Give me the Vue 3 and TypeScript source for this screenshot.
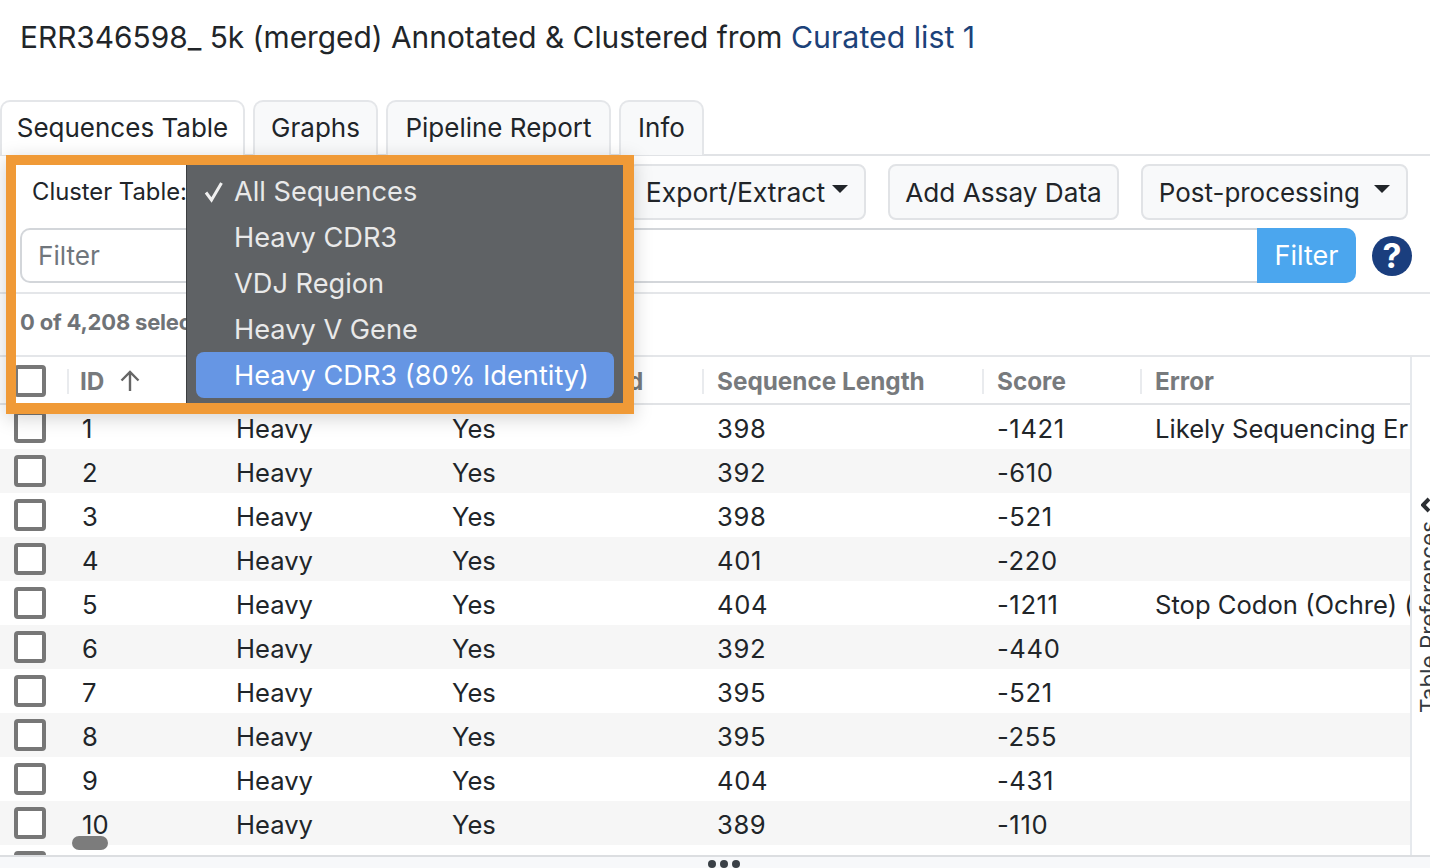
<script setup lang="ts">
interface Row { id: number; len: number; score: number; error: string }
const rows: Row[] = [
  { id: 1, len: 398, score: -1421, error: 'Likely Sequencing Error' },
  { id: 2, len: 392, score: -610, error: '' },
  { id: 3, len: 398, score: -521, error: '' },
  { id: 4, len: 401, score: -220, error: '' },
  { id: 5, len: 404, score: -1211, error: 'Stop Codon (Ochre) (1)' },
  { id: 6, len: 392, score: -440, error: '' },
  { id: 7, len: 395, score: -521, error: '' },
  { id: 8, len: 395, score: -255, error: '' },
  { id: 9, len: 404, score: -431, error: '' },
  { id: 10, len: 389, score: -110, error: '' },
  { id: 11, len: 398, score: -300, error: '' },
]
const tabs = ['Sequences Table', 'Graphs', 'Pipeline Report', 'Info']
const menu = ['All Sequences', 'Heavy CDR3', 'VDJ Region', 'Heavy V Gene', 'Heavy CDR3 (80% Identity)']
</script>

<template>
  <div class="page">
    <h1 class="title">ERR346598_ 5k (merged) Annotated &amp; Clustered from <a class="link">Curated list 1</a></h1>

    <nav class="tabs">
      <div v-for="(t, i) in tabs" :key="t" class="tab" :class="{ active: i === 0 }">{{ t }}</div>
    </nav>

    <div class="toolbar">
      <span class="cluster">Cluster Table:</span>
      <div class="actions">
        <button class="btn export">Export/Extract<i class="caret"></i></button>
        <button class="btn assay">Add Assay Data</button>
        <button class="btn post">Post-processing<i class="caret"></i></button>
      </div>
    </div>

    <div class="filter-row">
      <div class="input">Filter</div>
      <button class="filter-btn">Filter</button>
      <span class="help">?</span>
    </div>

    <div class="selected">0 of 4,208 selected</div>

    <div class="content">
      <div class="table">
        <div class="grid head">
          <div class="cell check"><span class="box"></span></div>
          <div class="cell id"><span class="th">ID</span>
            <svg class="arrow" width="24" height="24" viewBox="0 0 24 24" fill="none" stroke="#666" stroke-width="2.4"><path d="M12 22V3M3.5 11.5 12 3l8.5 8.5" /></svg>
          </div>
          <div class="cell"><span class="th">Chain</span></div>
          <div class="cell annotated"><span class="th">Fully Annotated</span></div>
          <div class="cell"><span class="th">Sequence Length</span></div>
          <div class="cell"><span class="th">Score</span></div>
          <div class="cell"><span class="th">Error</span></div>
        </div>
        <div v-for="r in rows" :key="r.id" class="grid row" :class="{ even: r.id % 2 === 0 }">
          <div class="td check"><span class="box"></span></div>
          <div class="td">{{ r.id }}</div>
          <div class="td">Heavy</div>
          <div class="td">Yes</div>
          <div class="td num">{{ r.len }}</div>
          <div class="td num">{{ r.score }}</div>
          <div class="td err">{{ r.error }}</div>
        </div>
        <span class="thumb"></span>
      </div>
      <aside class="side">
        <svg class="chev" width="14" height="20" viewBox="0 0 14 20" fill="none" stroke="#2c2f33" stroke-width="4"><path d="M1 11 8 4M1 9l7 7" /></svg>
        <span class="side-text">Table Preferences</span>
      </aside>
    </div>

    <div class="bottom"><i></i><i></i><i></i></div>

    <div class="highlight">
      <ul class="menu">
        <li v-for="(m, i) in menu" :key="m" :class="{ sel: i === 4 }">
          <svg v-if="i === 0" class="tick" width="20" height="22" viewBox="0 0 20 22" fill="none" stroke="#f0f0f0" stroke-width="3"><path d="M2 11.5 7.5 19 17.5 2" /></svg>
          {{ m }}
        </li>
      </ul>
    </div>
  </div>
</template>

<style scoped>
.page {
  position: relative;
  width: 1430px;
  height: 868px;
  overflow: hidden;
  background: #fff;
  display: flex;
  flex-direction: column;
  font-family: Inter, "Liberation Sans", sans-serif;
  color: #212529;
  font-size: 26.2px;
}
.title {
  margin: 0;
  height: 100px;
  padding: 16px 0 0 20px;
  box-sizing: border-box;
  font-size: 29.85px;
  line-height: 42px;
  font-weight: 400;
}
.link { color: #1c4279; font-size: 30.3px; }
.tabs {
  display: grid;
  grid-template-columns: 245px 125px 225px 85px;
  gap: 8px;
  height: 56px;
  box-sizing: border-box;
  border-bottom: 2px solid #e1e3e6;
  font-size: 26px;
}
.tab {
  height: 55px;
  line-height: 52px;
  text-align: center;
  white-space: nowrap;
  box-sizing: border-box;
  background: #f8f9fa;
  border: 2px solid #e4e6e9;
  border-bottom: 0;
  border-radius: 10px 10px 0 0;
}
.tab.active { background: #fff; }
.toolbar {
  height: 72px;
  display: flex;
  justify-content: space-between;
  padding: 8px 22px 0 32px;
  box-sizing: border-box;
}
.cluster { line-height: 56px; font-size: 23.8px; }
.actions { display: flex; gap: 22px; }
.btn {
  height: 56px;
  padding: 0 16px;
  font: inherit;
  color: #212529;
  background: #f8f9fa;
  border: 2px solid #e1e3e6;
  border-radius: 8px;
  display: flex;
  align-items: center;
}
.export { font-size: 26.5px; }
.assay { padding: 0 15px; }
.post { font-size: 25.95px; }
.caret {
  margin-left: 7px;
  width: 0;
  height: 0;
  border: 8px solid transparent;
  border-top-color: #212529;
  border-bottom: 0;
  margin-top: -6px;
}
.post .caret { margin-left: 14px; }
.filter-row {
  height: 55px;
  display: flex;
  padding: 0 18px 0 20px;
  align-items: center;
}
.input {
  flex: 1;
  height: 55px;
  box-sizing: border-box;
  border: 2px solid #d3d6da;
  border-right: 0;
  border-radius: 10px 0 0 10px;
  color: #70767c;
  line-height: 51px;
  padding-left: 16px;
}
.filter-btn {
  width: 99px;
  height: 55px;
  font: inherit;
  font-size: 27px;
  color: #fff;
  background: #4ba6ee;
  border: 0;
  border-radius: 0 10px 10px 0;
}
.help {
  width: 40px;
  height: 40px;
  margin-left: 16px;
  border-radius: 50%;
  background: #1a3e7e;
  color: #fff;
  font-size: 34px;
  font-weight: 700;
  line-height: 40px;
  text-align: center;
}
.selected {
  margin-top: 9px;
  height: 65px;
  box-sizing: border-box;
  border-top: 2px solid #e4e6e9;
  border-bottom: 2px solid #e4e6e9;
  padding-left: 20px;
  line-height: 57px;
  font-size: 22px;
  letter-spacing: -0.2px;
  font-weight: 700;
  color: #6f7377;
}
.content {
  flex: 1;
  display: flex;
  min-height: 0;
}
.table {
  position: relative;
  width: 1410px;
  overflow: hidden;
  flex: none;
}
.grid {
  display: grid;
  grid-template-columns: 67px 154px 216px 265px 280px 158px 270px;
}
.head {
  height: 44px;
  padding-top: 2px;
  border-bottom: 2px solid #e1e3e6;
  align-items: center;
}
.cell {
  position: relative;
  height: 25px;
  padding-left: 13px;
  display: flex;
  align-items: center;
  gap: 14px;
  border-left: 2px solid #e9ebee;
}
.cell.id { padding-left: 11px; }
.cell.annotated { padding-left: 17px; }
.cell.check { border: 0; padding-left: 14px; }
.th {
  font-size: 24.3px;
  font-weight: 700;
  color: #777a7d;
  white-space: nowrap;
}
.row {
  height: 44px;
  font-size: 25.6px;
  line-height: 48px;
}
.row.even { background: #f6f6f6; }
.td { padding-left: 15px; white-space: nowrap; overflow: hidden; }
.td.num { letter-spacing: 0.6px; }
.td.check { padding-left: 14px; overflow: visible; display: flex; padding-top: 6px; }
.err { overflow: hidden; }
.box {
  display: block;
  width: 32px;
  height: 32px;
  box-sizing: border-box;
  background: #fff;
  border: 4px solid #777;
  border-radius: 4px;
}
.thumb {
  position: absolute;
  left: 72px;
  bottom: 5px;
  width: 36px;
  height: 14px;
  border-radius: 7px;
  background: #7c7c7c;
}
.side {
  flex: 1;
  border-left: 2px solid #e6e9ed;
  display: flex;
  flex-direction: column;
  align-items: flex-start;
  padding: 138px 0 0 5px;
  overflow: hidden;
  gap: 6px;
}
.chev { margin-left: 4px; }
.side-text {
  writing-mode: vertical-rl;
  transform: rotate(180deg);
  font-size: 22.4px;
  line-height: 24px;
  white-space: nowrap;
  color: #343a40;
}
.bottom {
  height: 13px;
  flex: none;
  box-sizing: border-box;
  border-top: 2px solid #dcdee1;
  background: #f7f8fa;
  display: flex;
  justify-content: center;
  gap: 4px;
  padding-top: 3px;
  padding-left: 18px;
}
.bottom i {
  width: 8px;
  height: 8px;
  border-radius: 50%;
  background: #3a4046;
}
.highlight {
  position: absolute;
  left: 6px;
  top: 155px;
  width: 628px;
  height: 259px;
  box-sizing: border-box;
  border: solid #f09a37;
  border-width: 10px 11px 11px 10px;
  box-shadow: 0 4px 18px rgba(0, 0, 0, 0.18);
}
.menu {
  position: absolute;
  left: 170px;
  top: 0;
  right: 0;
  bottom: 0;
  margin: 0;
  padding: 3px 9px 0 9px;
  list-style: none;
  background: #5f6265;
  border-left: 1px solid #3c3e40;
  color: #e9e9e9;
  font-size: 27.2px;
}
.menu li {
  position: relative;
  height: 46px;
  line-height: 47px;
  padding-left: 38px;
  border-radius: 8px;
  white-space: nowrap;
}
.menu li.sel { background: #6696e4; color: #fff; }
.tick { position: absolute; left: 8px; top: 13px; }
</style>

<style>
html, body { margin: 0; overflow: hidden; }
</style>
